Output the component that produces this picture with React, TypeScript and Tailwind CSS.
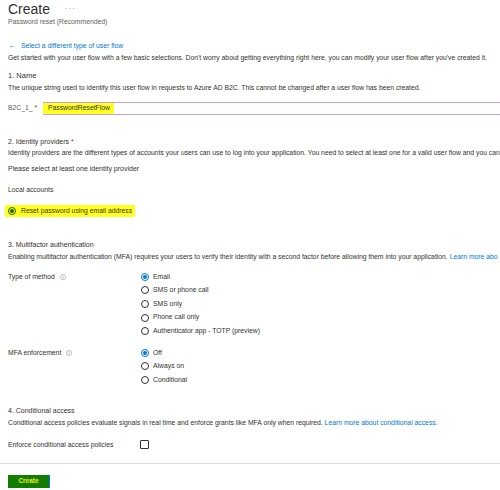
import { ReactNode } from 'react'

function InfoIcon() {
  return (
    <svg className="ml-[5px] inline-block h-[6px] w-[6px]" viewBox="0 0 12 12">
      <circle cx="6" cy="6" r="5.3" fill="none" stroke="#8a8886" strokeWidth="1" />
      <rect x="5.4" y="5" width="1.2" height="4" fill="#8a8886" />
      <rect x="5.4" y="3" width="1.2" height="1.2" fill="#8a8886" />
    </svg>
  )
}

function Radio({ label, checked = false }: { label: string; checked?: boolean }) {
  return (
    <div className="flex h-[13.6px] items-center">
      <span
        className={
          checked
            ? 'flex h-[8px] w-[8px] items-center justify-center rounded-full border border-[#0078d4]'
            : 'flex h-[8px] w-[8px] items-center justify-center rounded-full border border-[#323130]'
        }
      >
        {checked && <span className="h-[4px] w-[4px] rounded-full bg-[#0078d4]" />}
      </span>
      <span className="ml-[4px]">{label}</span>
    </div>
  )
}

function FieldRow({ label, children }: { label: ReactNode; children: ReactNode }) {
  return (
    <div className="flex">
      <div className="flex h-[13.6px] w-[133px] shrink-0 items-center">{label}</div>
      <div className="flex flex-col">{children}</div>
    </div>
  )
}

export default function App() {
  return (
    <div className="relative h-[490px] w-[500px] overflow-hidden whitespace-nowrap bg-white text-[6.8px] text-[#323130] [font-family:'Liberation_Sans',Arial,sans-serif]">
      <div className="px-[8px]">
        <div className="flex h-[18px] items-center">
          <h1 className="text-[14px] leading-[18px]">Create</h1>
          <span className="ml-[15px] text-[8px] tracking-[1px] text-[#8a8886]">···</span>
        </div>
        <div className="leading-[8px] text-[#605e5c]">Password reset (Recommended)</div>

        <div className="mt-[16px] flex items-center leading-[8px] text-[#0078d4]">
          <span className="mr-[5px] text-[8px]">←</span>
          <span>Select a different type of user flow</span>
        </div>
        <div className="mt-[4px] leading-[8px]">
          Get started with your user flow with a few basic selections. Don't worry about getting everything right here, you can modify your user flow after you've created it.
        </div>

        <div className="mt-[10px] text-[7.5px] leading-[8px]">1. Name</div>
        <div className="mt-[4px] leading-[8px]">
          The unique string used to identify this user flow in requests to Azure AD B2C. This cannot be changed after a user flow has been created.
        </div>

        <div className="mt-[10px] flex h-[13px] items-center">
          <span className="w-[35px] shrink-0 text-[#605e5c]">
            B2C_1_ <span className="text-[#a4262c]">*</span>
          </span>
          <div className="flex h-[13px] w-[600px] shrink-0 items-center border-y border-[#c8a0dd]">
            <span className="flex h-full items-center bg-[#ffff20] pl-[5px] pr-[4px] text-[#323130]">
              PasswordResetFlow
            </span>
          </div>
        </div>

        <div className="mt-[23px] text-[7px] leading-[8px]">
          2. Identity providers <span className="text-[#a4262c]">*</span>
        </div>
        <div className="mt-[3px] leading-[8px]">
          Identity providers are the different types of accounts your users can use to log into your application. You need to select at least one for a valid user flow and you can
        </div>
        <div className="mt-[8px] text-[7px] leading-[8px]">Please select at least one identity provider</div>
        <div className="mt-[13px] leading-[8px]">Local accounts</div>

        <div className="-ml-[3px] mt-[11px] flex h-[12px] w-[130px] items-center bg-[#ffff20] pl-[3px]">
          <span className="flex h-[8px] w-[8px] items-center justify-center rounded-full border border-[#1f6400]">
            <span className="h-[4px] w-[4px] rounded-full bg-[#1f6400]" />
          </span>
          <span className="ml-[5px] text-[#3a3a00]">Reset password using email address</span>
        </div>

        <div className="mt-[24px] text-[7px] leading-[8px]">3. Multifactor authentication</div>
        <div className="mt-[4px] leading-[8px]">
          Enabling multifactor authentication (MFA) requires your users to verify their identity with a second factor before allowing them into your application.{' '}
          <span className="text-[#0078d4]">Learn more abo</span>
        </div>

        <div className="mt-[9px]">
          <FieldRow
            label={
              <>
                Type of method
                <InfoIcon />
              </>
            }
          >
            <Radio label="Email" checked />
            <Radio label="SMS or phone call" />
            <Radio label="SMS only" />
            <Radio label="Phone call only" />
            <Radio label="Authenticator app - TOTP (preview)" />
          </FieldRow>
        </div>

        <div className="mt-[8px]">
          <FieldRow
            label={
              <>
                MFA enforcement
                <InfoIcon />
              </>
            }
          >
            <Radio label="Off" checked />
            <Radio label="Always on" />
            <Radio label="Conditional" />
          </FieldRow>
        </div>

        <div className="mt-[20px] text-[7px] leading-[8px]">4. Conditional access</div>
        <div className="mt-[4px] leading-[8px]">
          Conditional access policies evaluate signals in real time and enforce grants like MFA only when required.{' '}
          <span className="text-[#0078d4]">Learn more about conditional access.</span>
        </div>

        <div className="mt-[13px] flex h-[10px] items-center">
          <span className="w-[132px] shrink-0">Enforce conditional access policies</span>
          <span className="h-[9px] w-[9px] rounded-[1px] border border-[#323130]" />
        </div>
      </div>

      <div className="mt-[13px] h-[1px] w-full bg-[#e1dfdd]" />

      <div className="px-[8px] pt-[11px]">
        <button className="flex h-[13px] w-[42px] items-center justify-center border-r border-[#0078d4] bg-[#107c00] text-[6.5px] font-bold text-[#f0f000]">
          Create
        </button>
      </div>
    </div>
  )
}
